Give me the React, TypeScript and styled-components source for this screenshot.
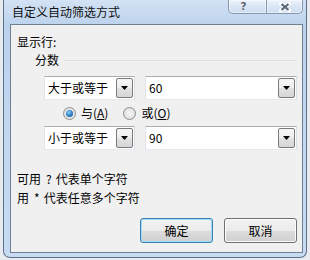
import React from 'react';
import styled, { createGlobalStyle } from 'styled-components';

const GlobalStyle = createGlobalStyle`
  html, body {
    margin: 0;
    padding: 0;
    background: #e7eaee;
  }
  body {
    font-family: "Noto Sans CJK SC", "Noto Sans", sans-serif;
    font-size: 12px;
    color: #000;
  }
`;

const Window = styled.div`
  margin-left: 3px;
  width: 304px;
  height: 258px;
  box-sizing: border-box;
  display: flex;
  flex-direction: column;
  padding: 0 3px 4px 6px;
  border: 1px solid #5d7188;
  border-top: none;
  border-radius: 0 0 7px 7px;
  background: linear-gradient(180deg, #d3e2f4 0%, #bcd2ec 10%, #c3d8f1 60%, #c7dbf3 100%);
`;

const TitleBar = styled.div`
  height: 24px;
  display: flex;
  justify-content: space-between;
  align-items: flex-start;
`;

const Title = styled.div`
  padding: 4px 0 0 2px;
  line-height: 16px;
  font-size: 12px;
  color: #111;
`;

const CaptionGroup = styled.div`
  display: flex;
`;

const CaptionButton = styled.div<{ $wide: number; $last?: boolean }>`
  width: ${p => p.$wide}px;
  height: 14px;
  box-sizing: border-box;
  display: flex;
  align-items: center;
  justify-content: center;
  border: 1px solid #8797ab;
  border-top: none;
  border-left: ${p => (p.$last ? 'none' : '1px solid #8797ab')};
  border-radius: ${p => (p.$last ? '0 0 5px 0' : '0 0 0 5px')};
  background: linear-gradient(180deg, rgba(255,255,255,0.55) 0%, rgba(255,255,255,0.25) 50%, rgba(210,225,243,0.4) 100%);
  box-shadow: inset 0 0 0 1px rgba(255,255,255,0.5);
`;

const HelpGlyph = styled.span`
  font-family: "DejaVu Sans", sans-serif;
  font-weight: bold;
  font-size: 11px;
  line-height: 12px;
  color: #5b6674;
  margin-left: -8px;
  text-shadow: 0 0 1px #fff, 0 0 1px #fff;
`;

const Client = styled.div`
  flex: 1;
  display: flex;
  flex-direction: column;
  background: #f0f0f0;
  border: 1px solid #6f8093;
  padding: 0 5px 0 6px;
`;

const Label = styled.div`
  margin-top: 9px;
  line-height: 16px;
`;

const GroupHeader = styled.div`
  margin-top: 2px;
  padding-left: 18px;
  display: flex;
  align-items: center;
  gap: 5px;
  line-height: 16px;
`;

const GroupLine = styled.div`
  flex: 1;
  height: 1px;
  background: #d5dfe5;
`;

const Criteria = styled.div`
  margin: 8px 0 0 27px;
  display: flex;
  flex-direction: column;
`;

const Row = styled.div`
  display: flex;
  gap: 10px;
  height: 24px;
`;

const Combo = styled.div<{ $width?: number }>`
  ${p => (p.$width ? `width: ${p.$width}px;` : 'flex: 1;')}
  box-sizing: border-box;
  height: 24px;
  display: flex;
  align-items: stretch;
  background: #fff;
  border: 1px solid #abadb3;
  border-color: #abadb3 #dbdfe6 #e3e9ef #e2e3ea;
  padding: 1px;
`;

const ComboText = styled.div`
  flex: 1;
  padding-left: 2px;
  line-height: 20px;
  font-size: 12px;
`;

const DropButton = styled.div`
  width: 17px;
  box-sizing: border-box;
  border: 1px solid #7a7a7a;
  border-radius: 2px;
  display: flex;
  align-items: center;
  justify-content: center;
  background: linear-gradient(180deg, #f6f6f6 0%, #eeeeee 50%, #e2e2e2 51%, #d6d6d6 100%);
`;

const RadioRow = styled.div`
  height: 26px;
  display: flex;
  align-items: center;
  padding-left: 19px;
`;

const RadioItem = styled.label`
  display: flex;
  align-items: center;
  gap: 5px;
  margin-right: 15px;
  line-height: 16px;
`;

const RadioCircle = styled.span<{ $on?: boolean }>`
  width: 13px;
  height: 13px;
  box-sizing: border-box;
  border-radius: 50%;
  border: 1px solid #8e8f8f;
  background: radial-gradient(circle at 50% 50%, #f5f5f5 0%, #e4e4e4 60%, #d4d4d4 100%);
  display: flex;
  align-items: center;
  justify-content: center;
  &::after {
    content: '';
    display: ${p => (p.$on ? 'block' : 'none')};
    width: 7px;
    height: 7px;
    border-radius: 50%;
    background: radial-gradient(circle at 40% 35%, #8fd0f8 0%, #2a7bc4 55%, #1a4f8a 100%);
  }
`;

const Under = styled.span`
  text-decoration: underline;
`;

const Hints = styled.div`
  margin-top: 19px;
  line-height: 19px;
`;

const Wildcard = styled.span`
  margin: 0 4px 0 5px;
`;

const ButtonBar = styled.div`
  margin-top: 11px;
  display: flex;
  justify-content: flex-end;
  gap: 11px;
`;

const DialogButton = styled.div<{ $default?: boolean }>`
  width: 73px;
  height: 25px;
  box-sizing: border-box;
  display: flex;
  align-items: center;
  justify-content: center;
  border-radius: 3px;
  border: 1px solid ${p => (p.$default ? '#3c7fb1' : '#707070')};
  box-shadow: inset 0 0 0 1px ${p => (p.$default ? '#9ddcf7' : '#fcfcfc')};
  background: linear-gradient(180deg, #f2f2f2 0%, #ebebeb 50%, #dddddd 51%, #cfcfcf 100%);
  font-size: 12px;
`;

const Arrow = () => (
  <svg width="7" height="4" viewBox="0 0 7 4">
    <path d="M0 0h7L3.5 4z" fill="#000" />
  </svg>
);

const CloseGlyph = () => (
  <svg width="12" height="10" viewBox="0 0 12 10">
    <path d="M2 1.5l8 7M10 1.5l-8 7" stroke="#fff" strokeWidth="4" strokeLinecap="round" />
    <path d="M2.5 2l7 6M9.5 2l-7 6" stroke="#5b6674" strokeWidth="2.2" />
  </svg>
);

const ComboBox: React.FC<{ value: string; width?: number }> = ({ value, width }) => (
  <Combo $width={width}>
    <ComboText>{value}</ComboText>
    <DropButton>
      <Arrow />
    </DropButton>
  </Combo>
);

export default function App() {
  return (
    <>
      <GlobalStyle />
      <Window>
        <TitleBar>
          <Title>自定义自动筛选方式</Title>
          <CaptionGroup>
            <CaptionButton $wide={39}>
              <HelpGlyph>?</HelpGlyph>
            </CaptionButton>
            <CaptionButton $wide={36} $last>
              <CloseGlyph />
            </CaptionButton>
          </CaptionGroup>
        </TitleBar>
        <Client>
          <Label>显示行:</Label>
          <GroupHeader>
            <span>分数</span>
            <GroupLine />
          </GroupHeader>
          <Criteria>
            <Row>
              <ComboBox value="大于或等于" width={91} />
              <ComboBox value="60" />
            </Row>
            <RadioRow>
              <RadioItem>
                <RadioCircle $on />
                <span>与(<Under>A</Under>)</span>
              </RadioItem>
              <RadioItem>
                <RadioCircle />
                <span>或(<Under>O</Under>)</span>
              </RadioItem>
            </RadioRow>
            <Row>
              <ComboBox value="小于或等于" width={91} />
              <ComboBox value="90" />
            </Row>
          </Criteria>
          <Hints>
            <div>可用<Wildcard>?</Wildcard>代表单个字符</div>
            <div>用<Wildcard>*</Wildcard>代表任意多个字符</div>
          </Hints>
          <ButtonBar>
            <DialogButton $default>确定</DialogButton>
            <DialogButton>取消</DialogButton>
          </ButtonBar>
        </Client>
      </Window>
    </>
  );
}
